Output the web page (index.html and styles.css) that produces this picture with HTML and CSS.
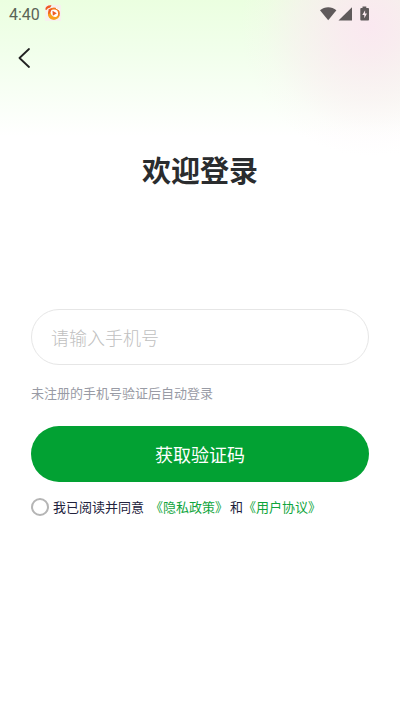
FILE: index.html
```html
<!DOCTYPE html>
<html lang="zh-CN">
<head>
<meta charset="utf-8">
<meta name="viewport" content="width=device-width, initial-scale=1">
<title>欢迎登录</title>
<link rel="stylesheet" href="styles.css">
</head>
<body>
<div class="screen">
  <header class="status">
    <span class="time">4:40</span>
    <svg class="app-icon" width="16" height="16" viewBox="0 0 16 16" aria-hidden="true">
      <rect width="16" height="16" fill="#f6f1ee"/>
      <circle cx="9" cy="8.500" r="5" fill="#fff" stroke="#f47a20" stroke-width="1.800"/>
      <path d="M3 7C2.500 12 5 14.800 9 14.700 12 14.700 14.200 12.500 14.500 10 12 13 6.500 12.800 5.500 7.500Z" fill="#f9a01b"/>
      <path d="M.3 4.500C.3 1.500 2.800-.1 6.500.2 5.900 2.300 4.700 3.200 3 3.200L1.400 4.900Z" fill="#ee5a24"/>
      <path d="M3.600 4.200L7 3 5.200 8 3.200 9.500Z" fill="#ee5a24"/>
      <path d="M7.500 5.800L11.800 8.200 7.800 10.800Z" fill="#ee5a24"/>
      <path d="M11 3.200L15 5.200" stroke="#fff" stroke-width="1"/>
    </svg>
    <svg class="signals" width="50" height="16" viewBox="0 0 50 16" fill="#5f5a5b" aria-hidden="true">
      <path d="M0 4.200C4.700.3 11.700.3 16.400 4.200L8.200 14.200Z"/>
      <path d="M32 1.200V14.500H18.500Z"/>
      <path fill-rule="evenodd" d="M42.500.5H46.300V2H48.200Q49 2 49 2.900V13.600Q49 14.500 48.200 14.500H41.200Q40.300 14.500 40.300 13.600V2.900Q40.300 2 41.200 2H42.500ZM45.100 4.300L42.300 9H44.300V12.200L47 7.500H45.100Z"/>
    </svg>
  </header>
  <nav class="nav">
    <button class="back" type="button" aria-label="返回">
      <svg width="12" height="20" viewBox="0 0 12 20" fill="none" stroke="#222" stroke-width="1.800" stroke-linecap="round" stroke-linejoin="round" aria-hidden="true"><path d="M11 1L1.500 10 11 19"/></svg>
    </button>
  </nav>
  <main class="login">
    <h1 class="title">欢迎登录</h1>
    <form class="form">
      <input class="phone" type="tel" placeholder="请输入手机号" aria-label="手机号">
      <p class="hint">未注册的手机号验证后自动登录</p>
      <button class="submit" type="button">获取验证码</button>
      <div class="terms">
        <input class="agree" type="checkbox" id="agree">
        <label class="agree-label" for="agree">我已阅读并同意</label>
        <a class="link" href="#privacy">《隐私政策》</a>
        <span class="and">和</span>
        <a class="link" href="#terms">《用户协议》</a>
      </div>
    </form>
  </main>
</div>
</body>
</html>
```
FILE: styles.css
```css
* {
  box-sizing: border-box;
}

body {
  margin: 0;
  background: #fff;
  font-family: "Noto Sans CJK SC", sans-serif;
}

.screen {
  min-height: 100vh;
  background:
    radial-gradient(circle at 370px 26px, #fae8f0 0, #fae9f0d9 30px, #faecf180 75px, #fbeef226 105px, #fbeef200 130px) no-repeat,
    linear-gradient(#ebffe0 0, #f1ffeb 50px, #fff 136px) no-repeat;
}

.status {
  display: flex;
  align-items: center;
  height: 30px;
  padding: 0 30px 0 9px;
}

.time {
  color: #5a6356;
  font: 400 16px/28px Roboto, sans-serif;
}

.app-icon {
  margin: 0 0 4px 5px;
}

.signals {
  margin: 0 0 2px auto;
}

.nav {
  display: flex;
  align-items: center;
  height: 56px;
  padding: 0 8px;
}

.back {
  display: grid;
  place-items: center;
  width: 32px;
  height: 40px;
  padding: 0;
  border: 0;
  background: none;
}

.login {
  padding: 61px 31px 32px;
}

.title {
  margin: 0;
  color: #2a2c2e;
  font-size: 29px;
  line-height: 44px;
  font-weight: 700;
  text-align: center;
}

.form {
  margin-top: 118px;
}

.phone {
  display: block;
  width: 100%;
  height: 56px;
  padding: 0 19px;
  border: 1px solid #e6e6e6;
  border-radius: 28px;
  background: #fff;
  color: #2a2c2e;
  font: 300 18px "Noto Sans CJK SC", sans-serif;
}

.phone::placeholder {
  color: #c0c0c0;
}

.hint {
  margin: 18px 0 23px;
  color: #999ba5;
  font-size: 13px;
  line-height: 20px;
}

.submit {
  display: block;
  width: 100%;
  height: 56px;
  padding: 0;
  border: 0;
  border-radius: 28px;
  background: #02a133;
  color: #fff;
  font: 400 18px "Noto Sans CJK SC", sans-serif;
}

.terms {
  display: flex;
  align-items: center;
  margin-top: 15px;
  font-size: 13px;
  line-height: 20px;
  white-space: nowrap;
}

.agree {
  appearance: none;
  width: 18px;
  height: 18px;
  margin: 0 4px 0 0;
  border: 2px solid #b5b5b5;
  border-radius: 50%;
}

.agree:checked {
  background: #02a133;
}

.agree-label {
  margin-right: 6px;
  color: #22223c;
}

.and {
  margin-left: 2px;
  color: #22223c;
}

.link {
  color: #10a53c;
  text-decoration: none;
}
```
